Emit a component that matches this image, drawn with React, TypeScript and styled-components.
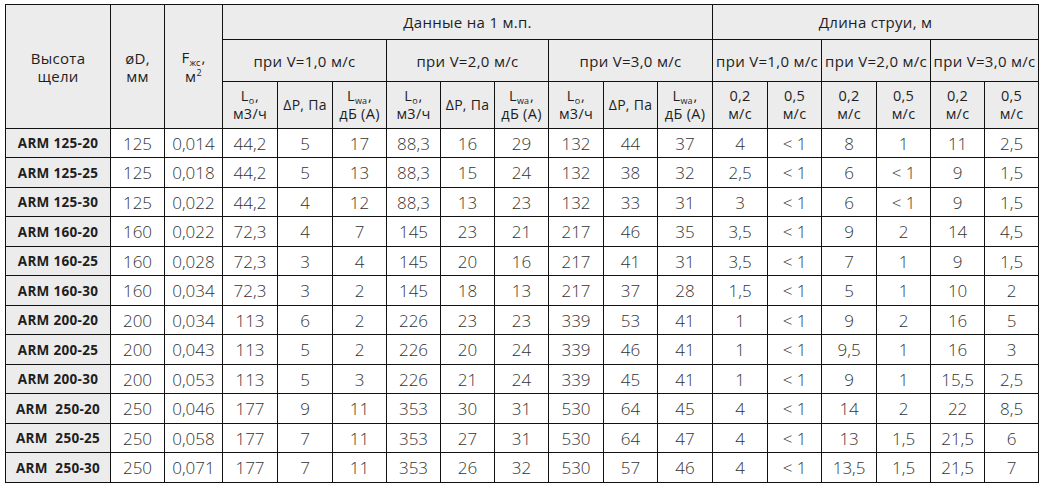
import React from "react";
import styled, { createGlobalStyle } from "styled-components";

const Global = createGlobalStyle`
  html, body { margin: 0; padding: 0; background: #fff; }
  body { font-family: "Open Sans", "DejaVu Sans", sans-serif; color: #222; -webkit-font-smoothing: antialiased; }
`;

const Page = styled.div`
  padding: 4px 0 0 5px;
  width: 1047px;
  height: 486px;
  box-sizing: border-box;
  background: #fff;
`;

const Table = styled.table`
  border-collapse: collapse;
  table-layout: fixed;
  width: 1033px;
  font-family: "Open Sans", "DejaVu Sans", sans-serif;
  td, th { border: 1px solid #111; padding: 0; text-align: center; vertical-align: middle; }
`;

const HeadRow = styled.tr<{ $h: number }>`
  height: ${(p) => p.$h}px;
`;

const Th = styled.th<{ $size?: number }>`
  background: #ececec;
  font-weight: 500;
  font-size: ${(p) => p.$size ?? 14.5}px;
  line-height: 18px;
  color: #1e1e1e;
  white-space: nowrap;
  letter-spacing: 0.3px;
`;

const BodyRow = styled.tr<{ $h: number }>`
  height: ${(p) => p.$h}px;
`;

const NameCell = styled.td`
  background: #ececec;
  font-weight: 700;
  font-size: 13.5px;
  color: #1e1e1e;
  white-space: pre;
  letter-spacing: 0.3px;
`;

const Cell = styled.td`
  font-weight: 300;
  font-size: 17px;
  color: #333;
  white-space: nowrap;
`;

const Sub = styled.sub`
  font-size: 9px;
  vertical-align: -3px;
  line-height: 1;
  letter-spacing: 0;
  margin-right: 1px;
`;

const Sup = styled.sup`
  font-size: 9px;
  vertical-align: 6px;
  line-height: 1;
`;

const widths = [105, 54, 58, 55, 55, 54, 54, 54, 54, 55, 54, 55, 55, 54, 55, 54, 54, 54];

const data: string[][] = [
  ["ARM 125-20", "125", "0,014", "44,2", "5", "17", "88,3", "16", "29", "132", "44", "37", "4", "< 1", "8", "1", "11", "2,5"],
  ["ARM 125-25", "125", "0,018", "44,2", "5", "13", "88,3", "15", "24", "132", "38", "32", "2,5", "< 1", "6", "< 1", "9", "1,5"],
  ["ARM 125-30", "125", "0,022", "44,2", "4", "12", "88,3", "13", "23", "132", "33", "31", "3", "< 1", "6", "< 1", "9", "1,5"],
  ["ARM 160-20", "160", "0,022", "72,3", "4", "7", "145", "23", "21", "217", "46", "35", "3,5", "< 1", "9", "2", "14", "4,5"],
  ["ARM 160-25", "160", "0,028", "72,3", "3", "4", "145", "20", "16", "217", "41", "31", "3,5", "< 1", "7", "1", "9", "1,5"],
  ["ARM 160-30", "160", "0,034", "72,3", "3", "2", "145", "18", "13", "217", "37", "28", "1,5", "< 1", "5", "1", "10", "2"],
  ["ARM 200-20", "200", "0,034", "113", "6", "2", "226", "23", "23", "339", "53", "41", "1", "< 1", "9", "2", "16", "5"],
  ["ARM 200-25", "200", "0,043", "113", "5", "2", "226", "20", "24", "339", "46", "41", "1", "< 1", "9,5", "1", "16", "3"],
  ["ARM 200-30", "200", "0,053", "113", "5", "3", "226", "21", "24", "339", "45", "41", "1", "< 1", "9", "1", "15,5", "2,5"],
  ["ARM  250-20", "250", "0,046", "177", "9", "11", "353", "30", "31", "530", "64", "45", "4", "< 1", "14", "2", "22", "8,5"],
  ["ARM  250-25", "250", "0,058", "177", "7", "11", "353", "27", "31", "530", "64", "47", "4", "< 1", "13", "1,5", "21,5", "6"],
  ["ARM  250-30", "250", "0,071", "177", "7", "11", "353", "26", "32", "530", "57", "46", "4", "< 1", "13,5", "1,5", "21,5", "7"],
];

const rowHeights = [29, 30, 29, 30, 29, 30, 29, 30, 29, 30, 29, 30];

const Lo = () => (
  <>
    L<Sub>o</Sub>,<br />м3/ч
  </>
);
const Lwa = () => (
  <>
    L<Sub>wa</Sub>,<br />дБ (А)
  </>
);

export default function App() {
  const speeds = ["1,0", "2,0", "3,0"];
  return (
    <Page>
      <Global />
      <Table>
        <colgroup>
          {widths.map((w, i) => (
            <col key={i} style={{ width: w }} />
          ))}
        </colgroup>
        <thead>
          <HeadRow $h={35}>
            <Th rowSpan={3} $size={15}>
              Высота
              <br />
              щели
            </Th>
            <Th rowSpan={3} $size={15}>
              øD,
              <br />
              мм
            </Th>
            <Th rowSpan={3} $size={15}>
              F<Sub>жс</Sub>,
              <br />
              м<Sup>2</Sup>
            </Th>
            <Th colSpan={9} $size={15}>Данные на 1 м.п.</Th>
            <Th colSpan={6} $size={15}>Длина струи, м</Th>
          </HeadRow>
          <HeadRow $h={42}>
            {speeds.map((s) => (
              <Th key={"a" + s} colSpan={3} $size={15}>
                при V={s} м/с
              </Th>
            ))}
            {speeds.map((s) => (
              <Th key={"b" + s} colSpan={2} $size={15}>
                при V={s} м/с
              </Th>
            ))}
          </HeadRow>
          <HeadRow $h={47}>
            {speeds.map((s) => (
              <React.Fragment key={"c" + s}>
                <Th>
                  <Lo />
                </Th>
                <Th $size={14}>ΔP, Па</Th>
                <Th>
                  <Lwa />
                </Th>
              </React.Fragment>
            ))}
            {speeds.map((s) => (
              <React.Fragment key={"d" + s}>
                <Th>
                  0,2
                  <br />
                  м/с
                </Th>
                <Th>
                  0,5
                  <br />
                  м/с
                </Th>
              </React.Fragment>
            ))}
          </HeadRow>
        </thead>
        <tbody>
          {data.map((row, r) => (
            <BodyRow key={r} $h={rowHeights[r]}>
              <NameCell>{row[0]}</NameCell>
              {row.slice(1).map((v, c) => (
                <Cell key={c}>{v}</Cell>
              ))}
            </BodyRow>
          ))}
        </tbody>
      </Table>
    </Page>
  );
}
